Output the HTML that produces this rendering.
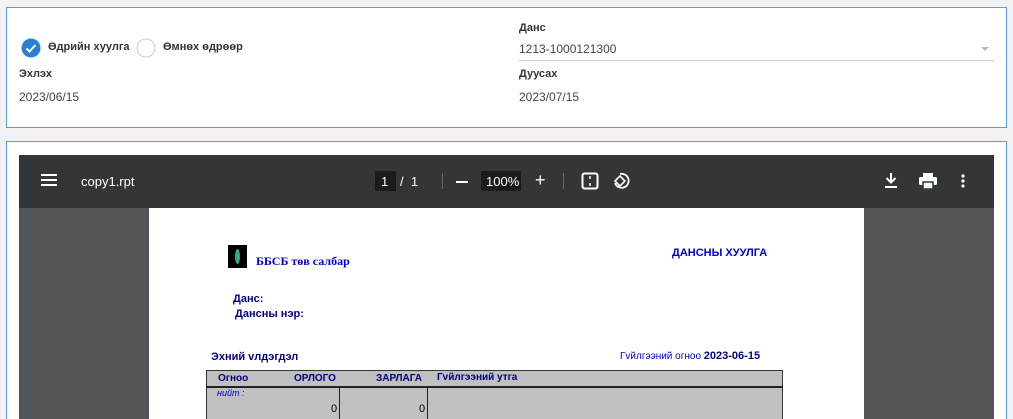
<!DOCTYPE html>
<html style="overflow:hidden;height:419px"><head><meta charset="utf-8"><style>
*{margin:0;padding:0;box-sizing:border-box}
body{width:1013px;height:419px;background:#f2f2f2;position:relative;overflow:hidden;font-family:"Liberation Sans","DejaVu Sans",sans-serif}
.a{position:absolute;white-space:nowrap}
.p1{left:6px;top:7px;width:1001px;height:121px;background:#fff;border:1px solid #5b9bd5}
.p2{left:6px;top:141px;width:1001px;height:278px;background:#fff;border:1px solid #5b9bd5;border-bottom:none}
.lbl{font-size:11px;font-weight:bold;color:#333}
.val{font-size:12px;color:#444}
.tb{left:19px;top:155px;width:975px;height:53px;background:#323639}
.bg{left:19px;top:208px;width:975px;height:211px;background:#525659}
.pg{left:149px;top:208px;width:715px;height:211px;background:#fff}
.w{color:#fff;font-size:13px}
.b{color:#0000cc;font-weight:bold}
.n{color:#000080;font-weight:bold;font-size:11px}
</style></head><body>
<div class="a p1"></div>
<svg class="a" style="left:21px;top:38px" width="20" height="20"><circle cx="10" cy="10" r="9.5" fill="#2b7fd3"/><path d="M5.5 10.5l3 3 6-6.5" stroke="#fff" stroke-width="2" fill="none"/></svg>
<div class="a lbl" style="left:48px;top:41px">Өдрийн хуулга</div>
<svg class="a" style="left:136px;top:38px" width="20" height="20"><circle cx="10" cy="10" r="9" fill="#fff" stroke="#ccc"/></svg>
<div class="a lbl" style="left:163px;top:41px">Өмнөх өдрөөр</div>
<div class="a lbl" style="left:19px;top:68px">Эхлэх</div>
<div class="a val" style="left:19px;top:90px">2023/06/15</div>
<div class="a lbl" style="left:519px;top:22px">Данс</div>
<div class="a val" style="left:519px;top:42px">1213-1000121300</div>
<div class="a" style="left:981px;top:47px;border:4px solid transparent;border-top:4px solid #bbb"></div>
<div class="a" style="left:519px;top:60px;width:475px;height:1px;background:#ccc"></div>
<div class="a lbl" style="left:519px;top:68px">Дуусах</div>
<div class="a val" style="left:519px;top:90px">2023/07/15</div>

<div class="a p2"></div>
<div class="a tb"></div>
<div class="a bg"></div>
<div class="a pg"></div>
<svg class="a" style="left:41px;top:173px" width="16" height="14"><path d="M0 2h16M0 7h16M0 12h16" stroke="#fff" stroke-width="2"/></svg>
<div class="a w" style="left:81px;top:174px">copy1.rpt</div>
<div class="a" style="left:375px;top:171px;width:21px;height:20px;background:#191b1c"></div>
<div class="a w" style="left:381px;top:174px">1</div>
<div class="a w" style="left:400px;top:174px">/&nbsp;&nbsp;1</div>
<div class="a" style="left:442px;top:173px;width:1px;height:16px;background:#666"></div>
<div class="a" style="left:456px;top:181px;width:12px;height:2px;background:#fff"></div>
<div class="a" style="left:481px;top:171px;width:40px;height:20px;background:#191b1c"></div>
<div class="a w" style="left:486px;top:174px">100%</div>
<div class="a w" style="left:535px;top:170px;font-size:18px">+</div>
<div class="a" style="left:563px;top:173px;width:1px;height:16px;background:#666"></div>
<svg class="a" style="left:581px;top:172px" width="18" height="18"><rect x="1.5" y="1.5" width="15" height="15" rx="2" stroke="#fff" stroke-width="2" fill="none"/><path d="M9 4v3M9 11v3" stroke="#fff" stroke-width="1.5"/></svg>
<svg class="a" style="left:612px;top:171px" width="20" height="20"><path d="M8 3a7 7 0 1 1 -5 9" stroke="#fff" stroke-width="1.8" fill="none"/><path d="M3 10l5-5 5 5-5 5z" stroke="#fff" stroke-width="1.6" fill="none"/></svg>
<svg class="a" style="left:884px;top:173px" width="14" height="16"><path d="M7 0v9M2.5 5l4.5 4.5 4.5-4.5" stroke="#fff" stroke-width="2" fill="none"/><path d="M1 14h12" stroke="#fff" stroke-width="2"/></svg>
<svg class="a" style="left:919px;top:173px" width="18" height="16"><rect x="4" y="0" width="10" height="4" fill="#fff"/><rect x="0" y="4" width="18" height="8" rx="1.5" fill="#fff"/><rect x="4" y="9" width="10" height="7" fill="#fff" stroke="#323639" stroke-width="1.5"/></svg>
<svg class="a" style="left:961px;top:174px" width="4" height="14"><circle cx="2" cy="2" r="1.6" fill="#fff"/><circle cx="2" cy="7" r="1.6" fill="#fff"/><circle cx="2" cy="12" r="1.6" fill="#fff"/></svg>

<div class="a" style="left:228px;top:245px;width:19px;height:23px;background:#000"><div style="margin:4px 0 0 7px;width:5px;height:15px;background:#2fae90;border-radius:50%"></div></div>
<div class="a b" style="left:256px;top:254px;font-family:'Liberation Serif',serif;font-size:12px">ББСБ төв салбар</div>
<div class="a b" style="left:672px;top:247px;font-size:11px">ДАНСНЫ ХУУЛГА</div>
<div class="a n" style="left:233px;top:293px">Данс:</div>
<div class="a n" style="left:235px;top:308px">Дансны нэр:</div>
<div class="a n" style="left:211px;top:351px">Эхний vлдэгдэл</div>
<div class="a" style="left:620px;top:350px;font-size:10px;color:#0000cc">Гvйлгээний огноо <b style="color:#000080;font-size:11px">2023-06-15</b></div>
<div class="a" style="left:206px;top:370px;width:577px;height:49px;background:#c0c0c0;border:1px solid #333;border-bottom:none"></div>
<div class="a" style="left:206px;top:386px;width:577px;height:2px;background:#222"></div>
<div class="a" style="left:339px;top:387px;width:1px;height:32px;background:#222"></div>
<div class="a" style="left:427px;top:387px;width:1px;height:32px;background:#222"></div>
<div class="a n" style="left:218px;top:373px;font-size:10px">Огноо</div>
<div class="a n" style="left:294px;top:373px;font-size:10px">ОРЛОГО</div>
<div class="a n" style="left:376px;top:373px;font-size:10px">ЗАРЛАГА</div>
<div class="a n" style="left:437px;top:372px;font-size:10px">Гvйлгээний утга</div>
<div class="a" style="left:217px;top:388px;font-size:9px;font-style:italic;color:#0000cc">нийт :</div>
<div class="a" style="left:331px;top:403px;font-size:11px">0</div>
<div class="a" style="left:419px;top:403px;font-size:11px">0</div>
</body></html>
